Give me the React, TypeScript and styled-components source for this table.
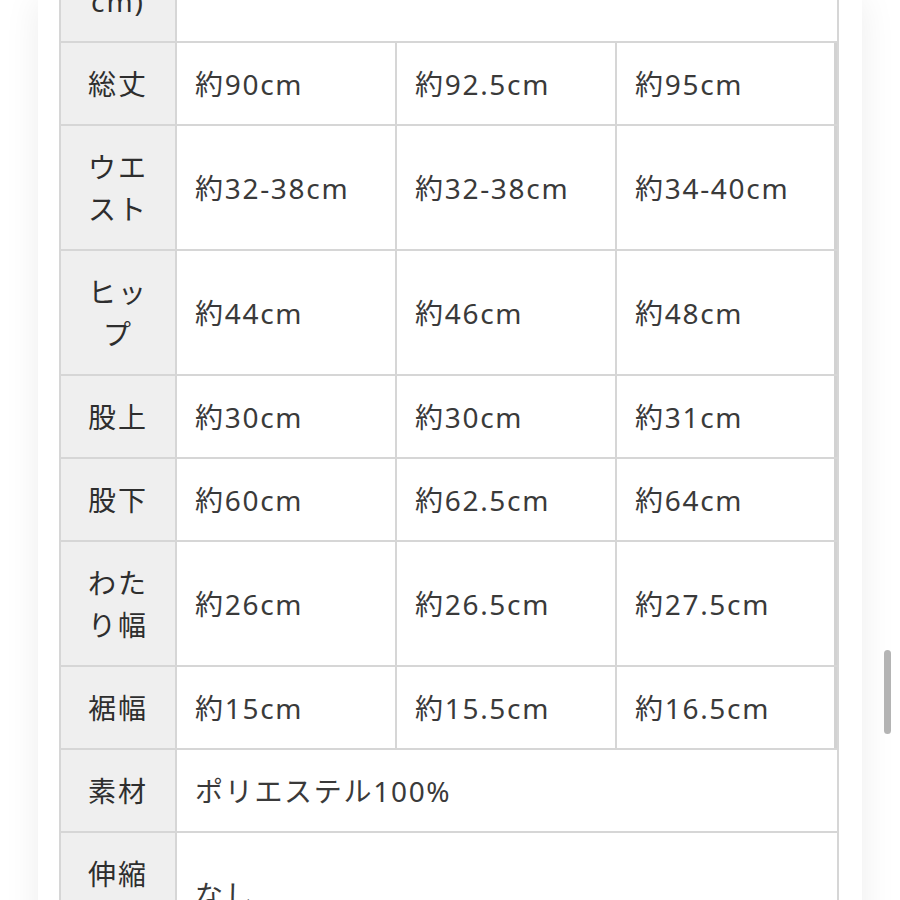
import React from "react";
import styled, { createGlobalStyle } from "styled-components";

const Global = createGlobalStyle`
  html, body {
    margin: 0;
    padding: 0;
    height: 900px;
    overflow: hidden;
    background: #ffffff;
  }
  body {
    font-family: "Noto Sans", "Noto Sans CJK JP", sans-serif;
  }
`;

const Page = styled.div`
  display: flex;
  padding-left: 38px;
  height: 900px;
`;

const Card = styled.div`
  width: 824px;
  min-height: 1000px;
  background: #ffffff;
  box-shadow: 0 0 34px rgba(0, 0, 0, 0.075);
  padding: 0 22px 0 21px;
  box-sizing: border-box;
`;

const Table = styled.table`
  width: 780px;
  margin-top: -84px;
  border-collapse: collapse;
  table-layout: fixed;
  border: 2px solid #d6d6d6;
  color: #3a3a3a;
  font-size: 28px;
  line-height: 42px;
`;

const HeadCell = styled.th`
  background: #efefef;
  border: 2px solid #d6d6d6;
  padding: 19.5px 20px;
  font-weight: 400;
  text-align: center;
  letter-spacing: 2px;
  color: #2e2e2e;
`;

const DataCell = styled.td<{ $edge?: boolean }>`
  border: 2px solid #d6d6d6;
  padding: 19.5px 10px 19.5px 18px;
  text-align: left;
  vertical-align: middle;
  letter-spacing: 1.7px;
  white-space: nowrap;
  box-shadow: ${(p) => (p.$edge ? "inset -3px 0 0 #d2d2d2" : "none")};
`;

const Thumb = styled.div`
  position: fixed;
  top: 650px;
  right: 9px;
  width: 7px;
  height: 84px;
  border-radius: 4px;
  background: #b4b4b4;
`;

type Row = { label: string; values: string[] };

const rows: Row[] = [
  { label: "総丈", values: ["約90cm", "約92.5cm", "約95cm"] },
  { label: "ウエスト", values: ["約32-38cm", "約32-38cm", "約34-40cm"] },
  { label: "ヒップ", values: ["約44cm", "約46cm", "約48cm"] },
  { label: "股上", values: ["約30cm", "約30cm", "約31cm"] },
  { label: "股下", values: ["約60cm", "約62.5cm", "約64cm"] },
  { label: "わたり幅", values: ["約26cm", "約26.5cm", "約27.5cm"] },
  { label: "裾幅", values: ["約15cm", "約15.5cm", "約16.5cm"] },
];

export default function App() {
  return (
    <>
      <Global />
      <Page>
        <Card>
          <Table>
            <colgroup>
              <col style={{ width: 116 }} />
              <col style={{ width: 220 }} />
              <col style={{ width: 220 }} />
              <col />
            </colgroup>
            <tbody>
              <tr>
                <HeadCell>
                  (単位
                  <br />
                  cm)
                </HeadCell>
                <DataCell colSpan={3} />
              </tr>
              {rows.map((r) => (
                <tr key={r.label}>
                  <HeadCell>{r.label}</HeadCell>
                  {r.values.map((v, i) => (
                    <DataCell key={i} $edge={i === 2}>
                      {v}
                    </DataCell>
                  ))}
                </tr>
              ))}
              <tr>
                <HeadCell>素材</HeadCell>
                <DataCell colSpan={3}>ポリエステル100%</DataCell>
              </tr>
              <tr>
                <HeadCell>伸縮性</HeadCell>
                <DataCell colSpan={3}>なし</DataCell>
              </tr>
            </tbody>
          </Table>
        </Card>
      </Page>
      <Thumb />
    </>
  );
}
